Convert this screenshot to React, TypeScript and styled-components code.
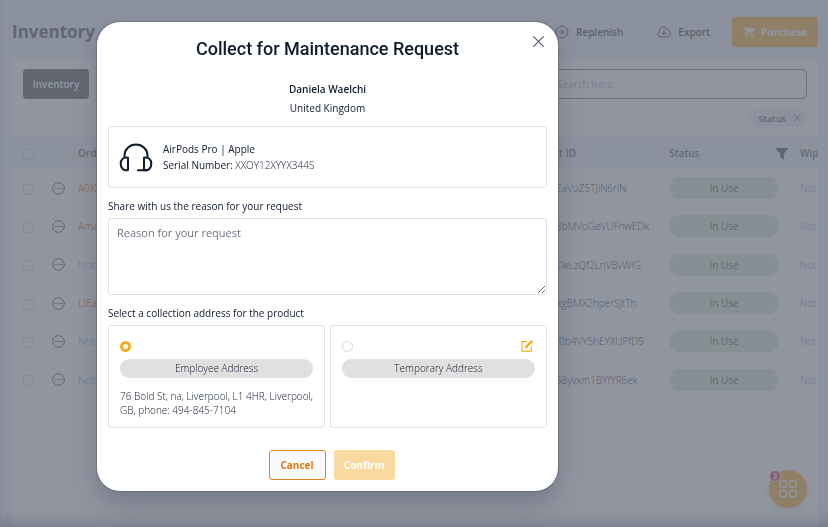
import React, { useState } from "react";
import styled, { createGlobalStyle } from "styled-components";

const GlobalStyle = createGlobalStyle`
  *, *::before, *::after { box-sizing: border-box; }
  html, body { margin: 0; height: 100%; }
  body {
    font-family: "Open Sans", "Noto Sans", sans-serif;
    font-size: 10px;
    color: #0f1b2b;
    background: #eceef6;
    overflow: hidden;
  }
  button, input, textarea { font: inherit; color: inherit; margin: 0; }
  #root { height: 100%; }
`;

const Page = styled.div`
  display: flex;
  flex-direction: column;
  min-height: 100vh;
  padding: 0 10px 0 11px;
  border-left: 1px solid #dcdde6;
`;

const Header = styled.header`
  display: flex;
  align-items: center;
  justify-content: space-between;
  height: 58px;
  padding-top: 5px;
`;

const PageTitle = styled.h1`
  margin: 0;
  font-size: 17px;
  font-weight: 700;
  color: #484848;
`;

const Actions = styled.div`
  display: flex;
  align-items: center;
`;

const GhostAction = styled.button`
  display: flex;
  align-items: center;
  gap: 7px;
  margin-right: 34px;
  padding: 0;
  border: 0;
  background: none;
  font-weight: 600;
  color: #303030;
`;

const PurchaseButton = styled.button`
  display: flex;
  align-items: center;
  justify-content: center;
  gap: 6px;
  width: 86px;
  height: 30px;
  margin-left: -12px;
  padding: 0;
  border: 0;
  border-radius: 3px;
  background: #f9a91f;
  color: #fff;
  font-weight: 700;
`;

const Panel = styled.main`
  flex: 1;
  border-radius: 5px 5px 0 0;
  background: #fff;
  overflow: hidden;
`;

const Toolbar = styled.div`
  display: flex;
  justify-content: space-between;
  padding: 11px 11px 0 11px;
`;

const TabButton = styled.button`
  width: 66px;
  height: 30px;
  padding: 0;
  border: 0;
  border-radius: 4px;
  background: #484848;
  color: #fff;
  font-weight: 600;
`;

const SearchInput = styled.input`
  width: 268px;
  height: 30px;
  padding: 0 17px;
  border: 1px solid #6b6f76;
  border-radius: 5px;
  background: #fff;
  &::placeholder { color: #a9adb5; opacity: 1; }
`;

const Filters = styled.div`
  display: flex;
  justify-content: flex-end;
  padding: 11px 11px 11px;
`;

const FilterChip = styled.button`
  display: flex;
  align-items: center;
  gap: 7px;
  height: 16px;
  padding: 0 6px 0 10px;
  border: 0;
  border-radius: 8px;
  background: #eceef2;
  color: #484848;
  font-size: 9px;
  font-weight: 600;
`;

const Table = styled.table`
  width: 100%;
  height: 262px;
  table-layout: fixed;
  border-collapse: collapse;
`;

const Col = styled.col<{ $w?: number }>`
  width: ${(p) => (p.$w ? `${p.$w}px` : "auto")};
`;

const Th = styled.th`
  height: 32px;
  padding: 0;
  background: #f0f1f4;
  text-align: left;
  font-weight: 600;
  color: #505050;
  white-space: nowrap;
  overflow: hidden;
`;

const ThInner = styled.div`
  display: flex;
  align-items: center;
  justify-content: space-between;
  padding-right: 12px;
`;

const Td = styled.td<{ $tone?: "link" | "muted" }>`
  padding: 0;
  color: ${(p) =>
    p.$tone === "link" ? "#e87a1a" : p.$tone === "muted" ? "#8c8c8c" : "#181818"};
  font-weight: ${(p) => (p.$tone === "link" ? 400 : 300)};
  white-space: nowrap;
  overflow: hidden;
`;

const RowCheck = styled.input`
  appearance: none;
  display: block;
  width: 11px;
  height: 11px;
  margin: 2px 0 0 11px;
  border: 1px solid #cfd2d8;
  border-radius: 3px;
`;

const IconButton = styled.button`
  display: block;
  padding: 0;
  border: 0;
  background: none;
  color: #383838;
  line-height: 0;
`;

const StatusPill = styled.span`
  display: block;
  width: 110px;
  height: 22px;
  border-radius: 11px;
  background: #d8e5d0;
  color: #445838;
  font-weight: 400;
  line-height: 22px;
  text-align: center;
`;

const Fab = styled.button`
  position: fixed;
  right: 21px;
  bottom: 19px;
  display: grid;
  place-items: center;
  width: 38px;
  height: 38px;
  padding: 0;
  border: 0;
  border-radius: 50%;
  background: #f9a91f;
  color: #fff;
  box-shadow: 0 3px 8px rgba(0, 0, 0, 0.15);
`;

const Badge = styled.span`
  position: absolute;
  top: 0;
  left: 0;
  width: 12px;
  height: 12px;
  border: 1px solid #fff;
  border-radius: 50%;
  background: #dc1f4c;
  font-size: 8px;
  font-weight: 700;
  line-height: 10px;
`;

const Overlay = styled.div`
  position: fixed;
  inset: 0;
  display: flex;
  align-items: flex-start;
  padding: 22px 270px 36px 97px;
  background: rgba(107, 114, 128, 0.75);
  box-shadow: inset 0 -16px 16px -14px rgba(70, 70, 85, 0.4);
`;

const Dialog = styled.form`
  position: relative;
  flex: 1;
  display: flex;
  flex-direction: column;
  padding: 14px 11px 11px;
  border-radius: 23px;
  background: #fff;
  box-shadow: 0 0 1px 1px rgba(90, 94, 108, 0.5), 0 12px 24px rgba(60, 62, 78, 0.3);
`;

const CloseButton = styled.button`
  position: absolute;
  top: 13px;
  right: 13px;
  padding: 0;
  border: 0;
  background: none;
  color: #4b5563;
  line-height: 0;
`;

const DialogTitle = styled.h2`
  margin: 0;
  font-family: Roboto, sans-serif;
  font-size: 18px;
  font-weight: 500;
  line-height: 26px;
  text-align: center;
`;

const Person = styled.div`
  display: flex;
  flex-direction: column;
  align-items: center;
  margin: 18px 0 8px;
  line-height: 19px;
`;

const PersonName = styled.strong`
  font-weight: 600;
`;

const ProductCard = styled.section`
  display: flex;
  align-items: center;
  gap: 10px;
  height: 62px;
  padding: 0 10px;
  border: 1px solid #e0e2e6;
  border-radius: 3px;
  line-height: 16px;
`;

const Serial = styled.span`
  font-weight: 300;
`;

const FieldLabel = styled.label`
  padding: 11px 0 5px;
  line-height: 14px;
`;

const Legend = styled.legend`
  padding: 11px 0 5px;
  line-height: 14px;
`;

const Reason = styled.textarea`
  display: block;
  width: 100%;
  height: 77px;
  padding: 6px 8px;
  border: 1px solid #dcdfe4;
  border-radius: 3px;
  resize: vertical;
  font-size: 11px;
  line-height: 16px;
  &::placeholder { color: #6b7280; opacity: 1; }
`;

const AddressGroup = styled.fieldset`
  min-width: 0;
  margin: 0;
  padding: 0;
  border: 0;
`;

const AddressGrid = styled.div`
  display: grid;
  grid-template-columns: 1fr 1fr;
  gap: 5px;
`;

const AddressCard = styled.div`
  min-height: 103px;
  padding: 13px 11px 10px;
  border: 1px solid #e0e2e6;
  border-radius: 3px;
`;

const AddressTop = styled.div`
  display: flex;
  align-items: center;
  justify-content: space-between;
  height: 14px;
  padding-right: 2px;
`;

const Radio = styled.input`
  appearance: none;
  width: 11px;
  height: 11px;
  border: 1px solid #d5d8de;
  border-radius: 50%;
  background: #fff;
  &:checked { border: 3px solid #f9ac1f; }
`;

const AddressName = styled.label`
  display: block;
  height: 19px;
  margin-top: 6px;
  border-radius: 10px;
  background: #e0e0e0;
  font-weight: 300;
  line-height: 19px;
  text-align: center;
`;

const AddressText = styled.p`
  margin: 11px -4px 0 0;
  font-weight: 300;
  line-height: 14px;
`;

const Buttons = styled.div`
  display: flex;
  justify-content: center;
  gap: 8px;
  margin-top: 22px;
  padding-left: 8px;
`;

const DialogButton = styled.button<{ $primary?: boolean }>`
  width: ${(p) => (p.$primary ? 61 : 57)}px;
  height: 30px;
  padding: 0;
  border: ${(p) => (p.$primary ? "0" : "1px solid #e8821e")};
  border-radius: 3px;
  background: ${(p) => (p.$primary ? "#fad9a0" : "#f9fafb")};
  color: ${(p) => (p.$primary ? "#fff" : "#df770e")};
  font-weight: 700;
`;

const stroke = {
  fill: "none",
  stroke: "currentColor",
  strokeLinecap: "round" as const,
  strokeLinejoin: "round" as const,
};

const PlusCircleIcon = () => (
  <svg width="14" height="14" viewBox="0 0 14 14" {...stroke}>
    <circle cx="7" cy="7" r="6" />
    <path d="M7 4.5v5M4.5 7h5" />
  </svg>
);

const CloudIcon = () => (
  <svg width="14" height="14" viewBox="0 0 14 14" {...stroke}>
    <path d="M3.6 12A2.7 2.7 0 0 1 2 7.2C2.2 4.200 4.100 2 6.600 2c2.200 0 3.400 1.200 3.900 3C12.300 5.300 13.300 6.700 13.300 8.500c0 2.200-1.300 3.500-3.200 3.500z" />
    <path d="M7 5.500v4M5.300 8 7 9.700 8.700 8" />
  </svg>
);

const CartIcon = () => (
  <svg width="12" height="12" viewBox="1 2 21 20" fill="currentColor">
    <path d="M7 18c-1.100 0-2 .9-2 2s.9 2 2 2 2-.9 2-2-.9-2-2-2zM1 2v2h2l3.600 7.600-1.400 2.400C4.500 15.400 5.500 17 7 17h12v-2H7.400l1.100-2h7.500c.7 0 1.400-.4 1.700-1L21.900 5H5.200l-.9-2zM17 18c-1.100 0-2 .9-2 2s.9 2 2 2 2-.9 2-2-.9-2-2-2z" />
  </svg>
);

const CloseIcon = ({ size }: { size: number }) => (
  <svg width={size} height={size} viewBox="0 0 12 12" {...stroke}>
    <path d="M1.500 1.500l9 9M10.500 1.500l-9 9" />
  </svg>
);

const FunnelIcon = () => (
  <svg width="12" height="13" viewBox="0 0 12 13" fill="#40444c">
    <path d="M.9 1h10.200c.8 0 1.100.8.600 1.400L7.800 6.700v5.400c0 .5-.4.700-.8.400L4.700 10.800c-.3-.2-.4-.5-.4-.8V6.700L.3 2.400C-.2 1.800.1 1 .9 1z" />
  </svg>
);

const MoreIcon = () => (
  <svg width="13" height="13" viewBox="0 0 13 13" {...stroke}>
    <circle cx="6.500" cy="6.500" r="5.800" />
    <path d="M3.800 6.500h.1M6.500 6.500h.1M9.200 6.500h.1" strokeWidth="1.500" />
  </svg>
);

const GridIcon = () => (
  <svg width="18" height="18" viewBox="0 0 18 18" {...stroke} strokeWidth="1.500">
    <rect x="1" y="1" width="6.500" height="6.500" rx="2" />
    <rect x="10.500" y="1" width="6.500" height="6.500" rx="2" />
    <rect x="1" y="10.500" width="6.500" height="6.500" rx="2" />
    <rect x="10.500" y="10.500" width="6.500" height="6.500" rx="2" />
  </svg>
);

const HeadphonesIcon = () => (
  <svg width="34" height="30" viewBox="0 0 34 30" {...stroke} strokeWidth="2">
    <path d="M5.500 15V13.500a11.500 11 0 0 1 23 0V15" />
    <path d="M9 15.800v12.200C4.500 29.300 1.700 26 1.700 21.900S4.500 14.500 9 15.800z" />
    <path d="M25 15.800v12.200c4.500 1.300 7.300-2 7.300-6.100S29.500 14.500 25 15.800z" />
    <path d="M19 28.300h9" />
  </svg>
);

const EditIcon = () => (
  <svg width="12" height="12" viewBox="0 0 12 12" {...stroke} stroke="#f9a91f">
    <path d="M5.500 1.700H1v9.500h9.300V6.800" strokeWidth="1.200" />
    <path d="M5 7.100 9.700 2.400" strokeWidth="2.400" strokeLinecap="butt" />
    <path d="M10.300 1.800l.3-.3" strokeWidth="2.400" />
    <path d="M4.200 8l.7-1.900L6 7.200z" fill="#f9a91f" strokeWidth=".5" />
  </svg>
);

const rows = [
  { order: "A0K0", product: "cln0XwEaVuZ5TJiN6rlN" },
  { order: "AmAx", product: "trwe9X8bMVoGeVUFnwEDk" },
  { order: null, product: "vR0cqcDkLzQf2LnVBvWIG" },
  { order: "LIEa", product: "m4zTwxgBMX2hperSJtTh" },
  { order: null, product: "b7nNsz0b4VY5hEYXUPfD9" },
  { order: null, product: "k2wQa68yvxm1BYfYR6ek" },
];

export default function App() {
  const [address, setAddress] = useState("employee");
  const [reason, setReason] = useState("");

  return (
    <>
      <GlobalStyle />
      <Page>
        <Header>
          <PageTitle>Inventory</PageTitle>
          <Actions>
            <GhostAction><PlusCircleIcon />Replenish</GhostAction>
            <GhostAction><CloudIcon />Export</GhostAction>
            <PurchaseButton><CartIcon />Purchase</PurchaseButton>
          </Actions>
        </Header>
        <Panel>
          <Toolbar>
            <TabButton>Inventory</TabButton>
            <SearchInput type="search" placeholder="Search here" aria-label="Search here" />
          </Toolbar>
          <Filters>
            <FilterChip>Status<CloseIcon size={8} /></FilterChip>
          </Filters>
          <Table>
            <colgroup>
              <Col $w={40} />
              <Col $w={26} />
              <Col />
              <Col $w={144} />
              <Col $w={131} />
              <Col $w={18} />
            </colgroup>
            <thead>
              <tr>
                <Th><RowCheck type="checkbox" aria-label="All" /></Th>
                <Th />
                <Th>Order ID</Th>
                <Th>Product ID</Th>
                <Th><ThInner>Status<FunnelIcon /></ThInner></Th>
                <Th>Wip</Th>
              </tr>
            </thead>
            <tbody>
              {rows.map((row) => (
                <tr key={row.product}>
                  <Td><RowCheck type="checkbox" aria-label={row.product} /></Td>
                  <Td><IconButton aria-label="More"><MoreIcon /></IconButton></Td>
                  <Td $tone={row.order ? "link" : "muted"}>{row.order ?? "Not"}</Td>
                  <Td>{row.product}</Td>
                  <Td><StatusPill>In Use</StatusPill></Td>
                  <Td $tone="muted">Not</Td>
                </tr>
              ))}
            </tbody>
          </Table>
        </Panel>
        <Fab aria-label="Apps"><GridIcon /><Badge>2</Badge></Fab>
      </Page>

      <Overlay>
        <Dialog role="dialog" aria-modal="true" aria-labelledby="dialog-title" onSubmit={(e) => e.preventDefault()}>
          <CloseButton type="button" aria-label="Close"><CloseIcon size={13} /></CloseButton>
          <DialogTitle id="dialog-title">Collect for Maintenance Request</DialogTitle>
          <Person>
            <PersonName>Daniela Waelchi</PersonName>
            <span>United Kingdom</span>
          </Person>
          <ProductCard>
            <HeadphonesIcon />
            <div>
              <div>AirPods Pro | Apple</div>
              <div>Serial Number: <Serial>XXOY12XYYX344S</Serial></div>
            </div>
          </ProductCard>
          <FieldLabel htmlFor="reason">Share with us the reason for your request</FieldLabel>
          <Reason
            id="reason"
            placeholder="Reason for your request"
            value={reason}
            onChange={(e) => setReason(e.target.value)}
          />
          <AddressGroup>
            <Legend>Select a collection address for the product</Legend>
            <AddressGrid>
              <AddressCard>
                <AddressTop>
                  <Radio
                    type="radio"
                    name="address"
                    id="employee"
                    checked={address === "employee"}
                    onChange={() => setAddress("employee")}
                  />
                </AddressTop>
                <AddressName htmlFor="employee">Employee Address</AddressName>
                <AddressText>76 Bold St, na, Liverpool, L1 4HR, Liverpool, GB, phone: 494-845-7104</AddressText>
              </AddressCard>
              <AddressCard>
                <AddressTop>
                  <Radio
                    type="radio"
                    name="address"
                    id="temporary"
                    checked={address === "temporary"}
                    onChange={() => setAddress("temporary")}
                  />
                  <IconButton type="button" aria-label="Edit"><EditIcon /></IconButton>
                </AddressTop>
                <AddressName htmlFor="temporary">Temporary Address</AddressName>
              </AddressCard>
            </AddressGrid>
          </AddressGroup>
          <Buttons>
            <DialogButton type="button">Cancel</DialogButton>
            <DialogButton type="submit" $primary>Confirm</DialogButton>
          </Buttons>
        </Dialog>
      </Overlay>
    </>
  );
}
